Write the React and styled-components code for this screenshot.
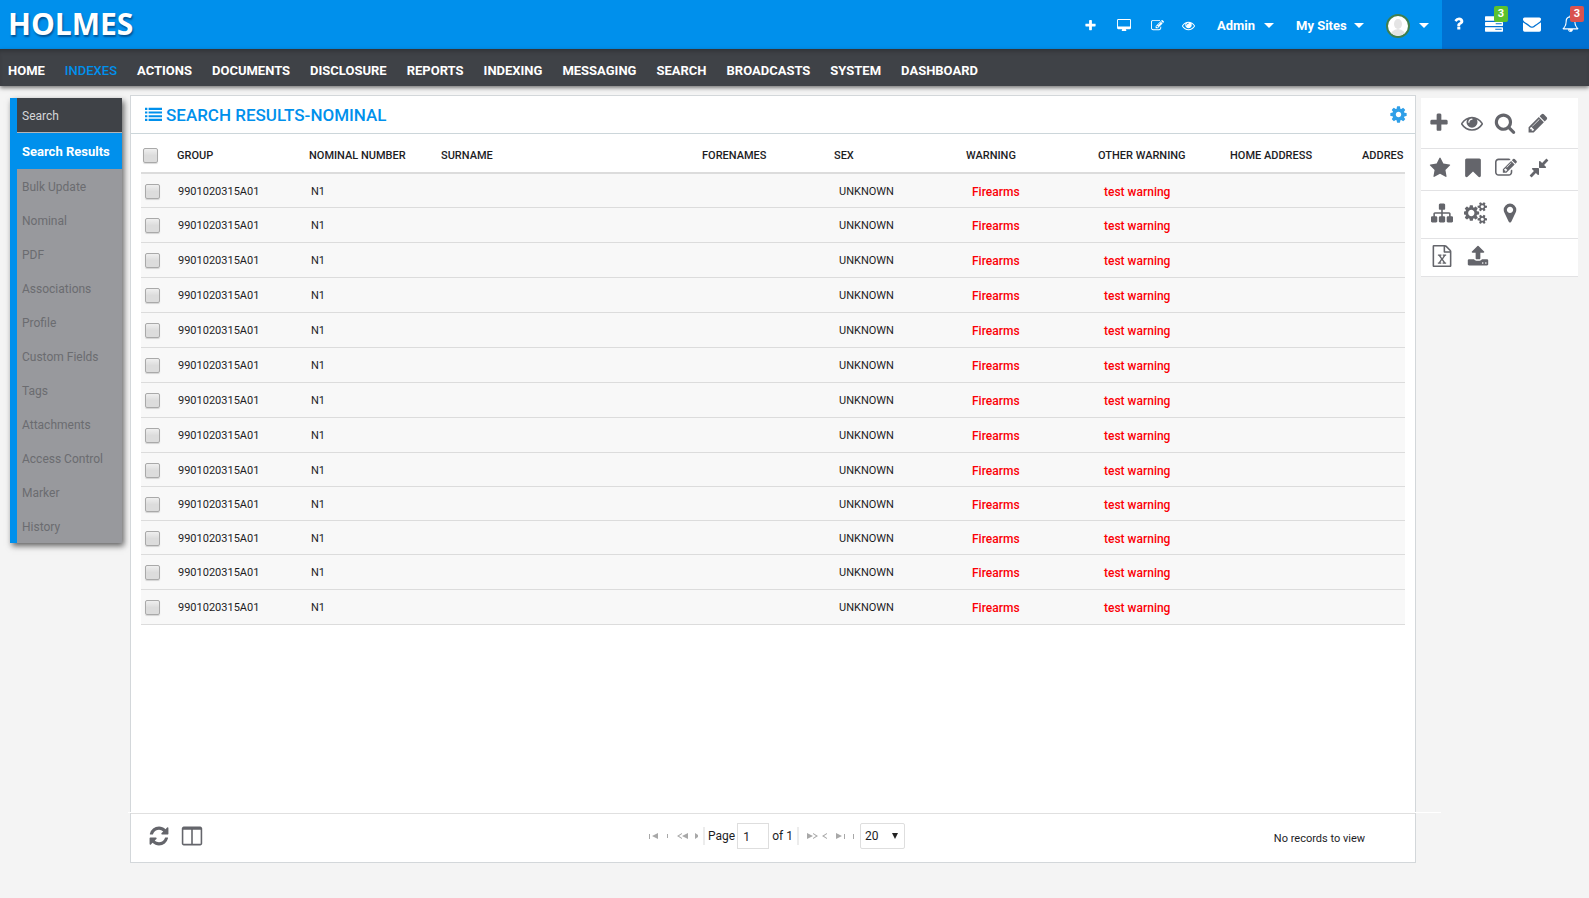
import React from "react";
import styled, { createGlobalStyle, css } from "styled-components";

const GlobalStyle = createGlobalStyle`
  * {
    box-sizing: border-box;
  }
  body {
    margin: 0;
    background: #f4f4f4;
    color: #1d1d1f;
    font-family: Roboto, "Liberation Sans", sans-serif;
    font-size: 12px;
  }
  button, input, select {
    font: inherit;
    color: inherit;
  }
  a {
    color: inherit;
    text-decoration: none;
  }
`;

const Page = styled.div`
  display: flex;
  flex-direction: column;
  min-height: 100vh;
`;

const TopBar = styled.header`
  display: flex;
  height: 49px;
  background: #0090ec;
  color: #fff;
`;

const Brand = styled.a`
  flex: 1;
  padding-left: 8px;
  font-family: "Open Sans", "Noto Sans", sans-serif;
  font-size: 30px;
  font-weight: 700;
  line-height: 48px;
  text-shadow: 1px 2px 2px rgba(0, 40, 90, 0.6);
`;

const TopTools = styled.div`
  display: flex;
  align-items: center;
  padding: 2px 13px 0 0;
`;

const TopButton = styled.button`
  display: flex;
  align-items: center;
  justify-content: ${(props) => (props.$wide ? "space-between" : "center")};
  width: ${(props) => props.$width || 32}px;
  height: 32px;
  padding: 0;
  border: 0;
  background: none;
  font-size: 13px;
  font-weight: 700;
  white-space: nowrap;
  cursor: pointer;
`;

const Menus = styled.div`
  display: flex;
  gap: 22px;
  margin-left: 13px;
`;

const Caret = styled.i`
  border: solid transparent;
  border-width: 5px 5px 0;
  border-top-color: #fff;
`;

const Avatar = styled.span`
  display: flex;
  width: 24px;
  height: 24px;
  border: 2px solid #3f7f4f;
  border-radius: 50%;
  background: #fff;
  overflow: hidden;
`;

const Alerts = styled.div`
  display: flex;
  align-items: center;
  gap: 2px;
  width: 147px;
  padding-bottom: 2px;
  background: #0071d2;
`;

const AlertButton = styled.button`
  position: relative;
  display: flex;
  align-items: center;
  justify-content: center;
  width: ${(props) => (props.$narrow ? 32 : 36)}px;
  height: 36px;
  padding: 0;
  border: 0;
  background: none;
  color: #fff;
  cursor: pointer;
`;

const Badge = styled.span`
  position: absolute;
  top: 0;
  right: 4px;
  padding: 0 4px;
  border-radius: 2px;
  background: ${(props) => props.$color};
  font-size: 11px;
  font-weight: 700;
  line-height: 16px;
`;

const Nav = styled.nav`
  display: flex;
  gap: 20px;
  height: 37px;
  padding: 0 8px;
  background: #3f4247;
  box-shadow: inset 0 4px 4px -2px #2f3236, 0 2px 4px rgba(0, 0, 0, 0.5);
`;

const NavLink = styled.a`
  color: ${(props) => (props.$active ? "#0090ec" : "#fff")};
  font-size: 13px;
  font-weight: ${(props) => (props.$active ? 500 : 700)};
  line-height: 43px;
  white-space: nowrap;
`;

const Workspace = styled.div`
  display: flex;
  flex: 1;
  align-items: flex-start;
  padding: 9px 11px 35px 10px;
`;

const Side = styled.nav`
  display: flex;
  flex-direction: column;
  width: 112px;
  margin: 3px 8px 0 0;
  border-left: 7px solid #0090ec;
  background: #98999d;
  box-shadow: 2px 3px 6px rgba(0, 0, 0, 0.6);
`;

const SideLink = styled.a`
  padding: 2px 0 0 5px;
  color: #6b6c70;
  font-size: 12px;
  line-height: 32px;
  white-space: nowrap;

  ${(props) =>
    props.$open &&
    css`
      border-bottom: 1px solid #b4b5b8;
      background: #3f4247;
      color: #d6d6d8;
    `}
  ${(props) =>
    props.$active &&
    css`
      background: #0090ec;
      color: #fff;
      font-size: 13px;
      font-weight: 700;
      line-height: 34px;
    `}
`;

const Panel = styled.main`
  display: flex;
  flex: 1;
  flex-direction: column;
  align-self: stretch;
  min-width: 0;
  border: 1px solid #d3d7da;
  background: #fff;
`;

const PanelHead = styled.div`
  display: flex;
  align-items: center;
  gap: 4px;
  height: 38px;
  padding: 0 7px 0 14px;
  border-bottom: 1px solid #ccd6da;
  color: #0090ec;
`;

const Title = styled.h1`
  flex: 1;
  margin: 0;
  font-size: 17px;
  font-weight: 500;
`;

const IconButton = styled.button`
  display: flex;
  padding: 0;
  border: 0;
  background: none;
  color: ${(props) => props.$color || "#64656b"};
  cursor: pointer;
`;

const TableWrap = styled.div`
  flex: 1;
  margin: 0 10px;
  overflow: hidden;
`;

const Table = styled.table`
  width: 100%;
  table-layout: fixed;
  border-collapse: separate;
  border-spacing: 0;
`;

const Col = styled.col`
  width: ${(props) => (props.$width ? `${props.$width}px` : "auto")};
`;

const Th = styled.th`
  height: 40px;
  padding: 4px 0 0 ${(props) => (props.$check ? 2 : 6)}px;
  border-bottom: 2px solid #dcdcdc;
  font-size: 11px;
  font-weight: 500;
  text-align: left;
  white-space: nowrap;
`;

const Row = styled.tr`
  height: ${(props) => (props.$tight ? 34 : 35)}px;
  background: #f8f8f8;
`;

const Td = styled.td`
  padding: 1px 0 0 ${(props) => props.$left || 8}px;
  border-bottom: 1px solid #dcdcdc;
  font-size: 11px;
  white-space: nowrap;

  ${(props) =>
    props.$alert &&
    css`
      padding-top: 2px;
      color: #fb0007;
      font-size: 12px;
      font-weight: 500;
    `}
`;

const Check = styled.input`
  display: block;
  width: 15px;
  height: 15px;
  margin: 0;
  border: 1px solid #a9a9a9;
  border-radius: 2px;
  background: linear-gradient(#efefef, #dcdcdc 50%);
  box-shadow: 0 1px 1px rgba(0, 0, 0, 0.15);
  appearance: none;
`;

const Footer = styled.footer`
  position: relative;
  display: grid;
  grid-template-columns: 1fr auto 1fr;
  align-items: center;
  height: 49px;
  padding: 0 17px 5px;
  border-top: 1px solid #e0e0e0;

  /* highlight above the rule, it runs past the panel on both sides */
  &::before {
    content: "";
    position: absolute;
    top: -2px;
    left: -3px;
    right: -26px;
    height: 1px;
    background: #fff;
  }
`;

const FooterTools = styled.div`
  display: flex;
  gap: 11px;
`;

const Pager = styled.div`
  display: flex;
  align-items: center;
  font-size: 12px;
`;

const PagerButton = styled(IconButton)`
  margin-left: 8px;
  color: #a8a8a8;
`;

const PageField = styled.label`
  display: flex;
  align-items: center;
  gap: 2px;
  margin: 0 8px 0 5px;
  padding: 0 4px 0 3px;
  border: solid #ececec;
  border-width: 0 2px;
  line-height: 18px;
`;

const PageInput = styled.input`
  width: 32px;
  height: 26px;
  margin: -4px 1px -4px 0;
  padding: 2px 5px 0;
  border: 1px solid #dedede;
  background: #fff;
`;

const SizeSelect = styled.select`
  width: 45px;
  height: 26px;
  margin-left: 5px;
  padding: 0 0 0 4px;
  border: 1px solid #dedede;
  border-radius: 2px;
  background: #fff;
  appearance: none;
`;

const SizeBox = styled.span`
  position: relative;
  display: flex;
`;

const SizeArrow = styled.i`
  position: absolute;
  top: 10px;
  right: 7px;
  border: solid transparent;
  border-width: 6px 3px 0;
  border-top-color: #222;
  pointer-events: none;
`;

const Status = styled.span`
  padding: 6px 33px 0 0;
  font-size: 11px;
  text-align: right;
`;

const Tools = styled.aside`
  width: 157px;
  margin: 3px 0 0 5px;
  background: #fff;
`;

const ToolRow = styled.div`
  display: flex;
  align-items: center;
  gap: ${(props) => props.$gap}px;
  height: ${(props) => props.$height}px;
  padding: 0 0 ${(props) => props.$bottom || 0}px ${(props) => props.$left}px;
  border-bottom: 1px solid #e2e2e4;
`;

const icons = {
  plus: "M1600 736v192q0 40-28 68t-68 28h-416v416q0 40-28 68t-68 28h-192q-40 0-68-28t-28-68v-416h-416q-40 0-68-28t-28-68v-192q0-40 28-68t68-28h416v-416q0-40 28-68t68-28h192q40 0 68 28t28 68v416h416q40 0 68 28t28 68z",
  desktop:
    "M1728 992v-832q0-13-9.5-22.5t-22.5-9.5h-1600q-13 0-22.5 9.5t-9.5 22.5v832q0 13 9.5 22.5t22.5 9.5h1600q13 0 22.5-9.5t9.5-22.5zm128-832v1088q0 66-47 113t-113 47h-544q0 37 16 77.5t32 71 16 43.5q0 26-19 45t-45 19h-512q-26 0-45-19t-19-45q0-14 16-44t32-70 16-78h-544q-66 0-113-47t-47-113v-1088q0-66 47-113t113-47h1600q66 0 113 47t47 113z",
  edit: "M888 1184l116-116-152-152-116 116v56h96v96h56zm440-720q-16-16-33 1l-350 350q-17 17-1 33t33-1l350-350q17-17 1-33zm80 594v190q0 119-84.5 203.5t-203.5 84.5h-832q-119 0-203.5-84.5t-84.5-203.5v-832q0-119 84.5-203.5t203.5-84.5h832q63 0 117 25 15 7 18 23 3 17-9 29l-49 49q-14 14-32 8-23-6-45-6h-832q-66 0-113 47t-47 113v832q0 66 47 113t113 47h832q66 0 113-47t47-113v-126q0-13 9-22l64-64q15-15 35-7t20 29zm-96-738l288 288-672 672h-288v-288zm444 132l-92 92-288-288 92-92q28-28 68-28t68 28l152 152q28 28 28 68t-28 68z",
  eye: "M1664 960q-152-236-381-353 61 104 61 225 0 185-131.5 316.5t-316.5 131.5-316.5-131.5-131.5-316.5q0-121 61-225-229 117-381 353 133 205 333.5 326.5t434.5 121.5 434.5-121.5 333.5-326.5zm-720-384q0-20-14-34t-34-14q-125 0-214.5 89.5t-89.5 214.5q0 20 14 34t34 14 34-14 14-34q0-86 61-147t147-61q20 0 34-14t14-34zm848 384q0 34-20 69-140 230-376.5 368.5t-499.5 138.5-499.5-139-376.5-368q-20-35-20-69t20-69q140-229 376.5-368t499.5-139 499.5 139 376.5 368q20 35 20 69z",
  question:
    "M1088 1256v240q0 16-12 28t-28 12h-240q-16 0-28-12t-12-28v-240q0-16 12-28t28-12h240q16 0 28 12t12 28zm316-600q0 54-15.5 101t-35 76.5-55 59.5-57.5 43.5-61 35.5q-41 23-68.5 65t-27.5 67q0 17-12 32.5t-28 15.5h-240q-15 0-25.5-18.5t-10.5-37.5v-45q0-83 65-156.5t143-108.5q59-27 84-56t25-76q0-42-46.5-74t-107.5-32q-65 0-108 29-35 25-107 115-13 16-31 16-12 0-25-8l-164-125q-13-10-15.5-25t5.5-28q160-266 464-266 80 0 161 31t146 83 106 127.5 41 158.5z",
  server:
    "M64 128h1664q64 0 64 64v320q0 64-64 64h-1664q-64 0-64-64v-320q0-64 64-64zM64 704h1664q64 0 64 64v256q0 64-64 64h-1664q-64 0-64-64v-256q0-64 64-64zm1000 110v100h600v-100zM64 1216h1664q64 0 64 64v320q0 64-64 64h-1664q-64 0-64-64v-320q0-64 64-64zm1600 150v100h-640v-100z",
  envelope:
    "M1792 710v794q0 66-47 113t-113 47h-1472q-66 0-113-47t-47-113v-794q44 49 101 87 362 246 497 345 57 42 92.5 65.5t94.5 48 110 24.5h2q51 0 110-24.5t94.5-48 92.5-65.5q170-123 498-345 57-39 100-87zm0-294q0 79-49 151t-122 123q-376 261-468 325-10 7-42.5 31t-54 38.5-52 32.5-57.5 27-50 9h-2q-23 0-50-9t-57.5-27-52-32.5-54-38.5-42.5-31q-91-64-262-182.5t-205-142.5q-62-42-117-115.5t-55-136.5q0-78 41.5-130t118.5-52h1472q65 0 112.5 47t47.5 113z",
  bell: "M912 1696q0-16-16-16-59 0-101.5-42.5t-42.5-101.5q0-16-16-16t-16 16q0 73 51.5 124.5t124.5 51.5q16 0 16-16zm-666-288h1300q-266-300-266-832 0-51-24-105t-69-103-121.5-80.5-169.5-31.5-169.5 31.5-121.5 80.5-69 103-24 105q0 532-266 832zm1482 0q0 52-38 90t-90 38h-448q0 106-75 181t-181 75-181-75-75-181h-448q-52 0-90-38t-38-90q50-42 91-88t85-119.5 74.5-158.5 50-206 19.5-260q0-152 117-282.5t307-158.5q-8-19-8-39 0-40 28-68t68-28 68 28 28 68q0 20-8 39 190 28 307 158.5t117 282.5q0 139 19.5 260t50 206 74.5 158.5 85 119.5 91 88z",
  list: "M0 192h250v220h-250zM380 192h1412v220h-1412zM0 580h250v220h-250zM380 580h1412v220h-1412zM0 968h250v220h-250zM380 968h1412v220h-1412zM0 1356h250v220h-250zM380 1356h1412v220h-1412z",
  cog: "M1152 896q0-106-75-181t-181-75-181 75-75 181 75 181 181 75 181-75 75-181zm512-109v222q0 12-8 23t-20 13l-185 28q-19 54-39 91 35 50 107 138 10 12 10 25t-9 23q-27 37-99 108t-94 71q-12 0-26-9l-138-108q-44 23-91 38-16 136-29 186-7 28-36 28h-222q-14 0-24.5-8.5t-11.5-21.5l-28-184q-49-16-90-37l-141 107q-10 9-25 9-14 0-25-11-126-114-165-168-7-10-7-23 0-12 8-23 15-21 51-66.5t54-70.5q-27-50-41-99l-183-27q-13-2-21-12.5t-8-23.5v-222q0-12 8-23t19-13l186-28q14-46 39-92-40-57-107-138-10-12-10-24 0-10 9-23 26-36 98.5-107.5t94.5-71.5q13 0 26 10l138 107q44-23 91-38 16-136 29-186 7-28 36-28h222q14 0 24.5 8.5t11.5 21.5l28 184q49 16 90 37l142-107q9-9 24-9 13 0 25 10 129 119 165 170 7 8 7 22 0 12-8 23-15 21-51 66.5t-54 70.5q26 50 41 98l183 28q13 2 21 12.5t8 23.5z",
  search:
    "M1216 832q0-185-131.5-316.5t-316.5-131.5-316.5 131.5-131.5 316.5 131.5 316.5 316.5 131.5 316.5-131.5 131.5-316.5zm512 832q0 52-38 90t-90 38q-54 0-90-38l-343-342q-179 124-399 124-143 0-273.5-55.5t-225-150-150-225-55.5-273.5 55.5-273.5 150-225 225-150 273.5-55.5 273.5 55.5 225 150 150 225 55.5 273.5q0 220-124 399l343 343q37 37 37 90z",
  pencil:
    "M491 1536l91-91-235-235-91 91v107h128v128h107zm523-928q0-22-22-22-10 0-17 7l-542 542q-7 7-7 17 0 22 22 22 10 0 17-7l542-542q7-7 7-17zm-54-192l416 416-832 832h-416v-416zm683 96q0 53-37 90l-166 166-416-416 166-165q36-38 90-38 53 0 91 38l235 234q37 39 37 91z",
  star: "M1728 647q0 22-26 48l-363 354 86 500q1 7 1 20 0 21-10.5 35.5t-30.5 14.5q-19 0-40-12l-449-236-449 236q-22 12-40 12-21 0-31.5-14.5t-10.5-35.5q0-6 2-20l86-500-364-354q-25-27-25-48 0-37 56-46l502-73 225-455q19-41 49-41t49 41l225 455 502 73q56 9 56 46z",
  bookmark:
    "M1420 128q23 0 44 9 33 13 52.5 41t19.5 62v1289q0 34-19.5 62t-52.5 41q-19 8-44 8-48 0-83-32l-441-424-441 424q-36 33-83 33-23 0-44-9-33-13-52.5-41t-19.5-62v-1289q0-34 19.5-62t52.5-41q21-9 44-9h1048z",
  compress:
    "M896 960v448q0 26-19 45t-45 19-45-19l-144-144-332 332q-10 10-23 10t-23-10l-114-114q-10-10-10-23t10-23l332-332-144-144q-19-19-19-45t19-45 45-19h448q26 0 45 19t19 45zm755-672q0 13-10 23l-332 332 144 144q19 19 19 45t-19 45-45 19h-448q-26 0-45-19t-19-45v-448q0-26 19-45t45-19 45 19l144 144 332-332q10-10 23-10t23 10l114 114q10 10 10 23z",
  sitemap:
    "M1792 1248v320q0 40-28 68t-68 28h-320q-40 0-68-28t-28-68v-320q0-40 28-68t68-28h96v-192h-512v192h96q40 0 68 28t28 68v320q0 40-28 68t-68 28h-320q-40 0-68-28t-28-68v-320q0-40 28-68t68-28h96v-192h-512v192h96q40 0 68 28t28 68v320q0 40-28 68t-68 28h-320q-40 0-68-28t-28-68v-320q0-40 28-68t68-28h96v-192q0-52 38-90t90-38h512v-192h-96q-40 0-68-28t-28-68v-320q0-40 28-68t68-28h320q40 0 68 28t28 68v320q0 40-28 68t-68 28h-96v192h512q52 0 90 38t38 90v192h96q40 0 68 28t28 68z",
  cogs: "M832 896q0-106-75-181t-181-75-181 75-75 181 75 181 181 75 181-75 75-181zm768 512q0-52-38-90t-90-38-90 38-38 90q0 53 37.5 90.5t90.5 37.5 90.5-37.5 37.5-90.5zm0-1024q0-52-38-90t-90-38-90 38-38 90q0 53 37.5 90.5t90.5 37.5 90.5-37.5 37.5-90.5zm-384 421v185q0 10-7 19.5t-16 10.5l-155 24q-11 35-32 76 34 48 90 115 7 11 7 20 0 12-7 19-23 30-82.5 89.5t-78.5 59.5q-11 0-21-7l-115-90q-37 19-77 31-11 108-23 155-7 24-30 24h-186q-11 0-20-7.5t-10-17.5l-23-153q-34-10-75-31l-118 89q-7 7-20 7-11 0-21-8-144-133-144-160 0-9 7-19 10-14 41-53t47-61q-23-44-35-82l-152-24q-10-1-17-9.5t-7-19.5v-185q0-10 7-19.5t16-10.5l155-24q11-35 32-76-34-48-90-115-7-11-7-20 0-12 7-20 22-30 82-89t79-59q11 0 21 7l115 90q34-18 77-32 11-108 23-154 7-24 30-24h186q11 0 20 7.5t10 17.5l23 153q34 10 75 31l118-89q8-7 20-7 11 0 21 8 144 133 144 160 0 8-7 19-12 16-42 54t-45 60q23 48 34 82l152 23q10 2 17 10.5t7 19.5zm640 533v140q0 16-149 31-12 27-30 52 51 113 51 138 0 4-4 7-122 71-124 71-8 0-46-47t-52-68q-20 2-30 2t-30-2q-14 21-52 68t-46 47q-2 0-124-71-4-3-4-7 0-25 51-138-18-25-30-52-149-15-149-31v-140q0-16 149-31 13-29 30-52-51-113-51-138 0-4 4-7 4-2 35-20t59-34 30-16q8 0 46 46.5t52 67.5q20-2 30-2t30 2q51-71 92-112l6-2q4 0 124 70 4 3 4 7 0 25-51 138 17 23 30 52 149 15 149 31zm0-1024v140q0 16-149 31-12 27-30 52 51 113 51 138 0 4-4 7-122 71-124 71-8 0-46-47t-52-68q-20 2-30 2t-30-2q-14 21-52 68t-46 47q-2 0-124-71-4-3-4-7 0-25 51-138-18-25-30-52-149-15-149-31v-140q0-16 149-31 13-29 30-52-51-113-51-138 0-4 4-7 4-2 35-20t59-34 30-16q8 0 46 46.5t52 67.5q20-2 30-2t30 2q51-71 92-112l6-2q4 0 124 70 4 3 4 7 0 25-51 138 17 23 30 52 149 15 149 31z",
  marker:
    "M1152 640q0-106-75-181t-181-75-181 75-75 181 75 181 181 75 181-75 75-181zm256 0q0 109-33 179l-364 774q-16 33-47.5 52t-67.5 19-67.5-19-46.5-52l-365-774q-33-70-33-179 0-212 150-362t362-150 362 150 150 362z",
  excel:
    "M1596 380q28 28 48 76t20 88v1152q0 40-28 68t-68 28h-1344q-40 0-68-28t-28-68v-1600q0-40 28-68t68-28h896q40 0 88 20t76 48zm-444-244v376h376q-10-29-22-41l-313-313q-12-12-41-22zm384 1528v-1024h-416q-40 0-68-28t-28-68v-416h-768v1536h1280zm-979-234v106h281v-106h-75l103-161q5-7 10-16.5t7.5-13.5 3.5-4h2q1 4 5 10 2 4 4.5 7.5t6 8 6.5 8.5l107 161h-76v106h291v-106h-68l-192-273 195-282h67v-107h-279v107h74l-103 159q-4 7-10 16.5t-9 13.5l-2 3h-2q-1-4-5-10-6-11-17-23l-106-159h76v-107h-290v107h68l189 272-194 283h-68z",
  upload:
    "M1344 1472q0-26-19-45t-45-19-45 19-19 45 19 45 45 19 45-19 19-45zm256 0q0-26-19-45t-45-19-45 19-19 45 19 45 45 19 45-19 19-45zm128-224v320q0 40-28 68t-68 28h-1472q-40 0-68-28t-28-68v-320q0-40 28-68t68-28h427q21 56 70.5 92t110.5 36h256q61 0 110.5-36t70.5-92h427q40 0 68 28t28 68zm-325-648q-17 40-59 40h-256v448q0 26-19 45t-45 19h-256q-26 0-45-19t-19-45v-448h-256q-42 0-59-40-17-39 14-69l448-448q18-19 45-19t45 19l448 448q31 30 14 69z",
  refresh:
    "M1639 1056q0 5-1 7-64 268-268 434.5t-478 166.5q-146 0-282.5-55t-243.5-157l-129 129q-19 19-45 19t-45-19-19-45v-448q0-26 19-45t45-19h448q26 0 45 19t19 45-19 45l-137 137q71 66 161 102t187 36q134 0 250-65t186-179q11-17 53-117 8-23 30-23h192q13 0 22.5 9.5t9.5 22.5zm25-800v448q0 26-19 45t-45 19h-448q-26 0-45-19t-19-45 19-45l138-138q-148-137-349-137-134 0-250 65t-186 179q-11 17-53 117-8 23-30 23h-199q-13 0-22.5-9.5t-9.5-22.5v-7q65-268 270-434.5t480-166.5q146 0 284 55.5t245 156.5l130-129q19-19 45-19t45 19 19 45z",
  columns:
    "M224 1536h608v-1152h-640v1120q0 13 9.5 22.5t22.5 9.5zm1376-32v-1120h-640v1152h608q13 0 22.5-9.5t9.5-22.5zm128-1216v1216q0 66-47 113t-113 47h-1344q-66 0-113-47t-47-113v-1216q0-66 47-113t113-47h1344q66 0 113 47t47 113z",
};

const WIDE = ["desktop", "cogs"];

const Icon = ({ name, size = 22 }) => {
  const wide = WIDE.includes(name);
  return (
    <svg
      width={wide ? size + 2 : size}
      height={size}
      viewBox={wide ? "0 0 1920 1792" : "0 0 1792 1792"}
      fill="currentColor"
      fillRule={name === "server" ? "evenodd" : "nonzero"}
      aria-hidden="true"
    >
      <path d={icons[name]} />
    </svg>
  );
};

const menu = [
  "HOME",
  "INDEXES",
  "ACTIONS",
  "DOCUMENTS",
  "DISCLOSURE",
  "REPORTS",
  "INDEXING",
  "MESSAGING",
  "SEARCH",
  "BROADCASTS",
  "SYSTEM",
  "DASHBOARD",
];

const sections = [
  "Search",
  "Search Results",
  "Bulk Update",
  "Nominal",
  "PDF",
  "Associations",
  "Profile",
  "Custom Fields",
  "Tags",
  "Attachments",
  "Access Control",
  "Marker",
  "History",
];

const columns = [
  { title: "GROUP", width: 132 },
  { title: "NOMINAL NUMBER", width: 132 },
  { title: "SURNAME" },
  { title: "FORENAMES", width: 132 },
  { title: "SEX", width: 132 },
  { title: "WARNING", width: 132 },
  { title: "OTHER WARNING", width: 132 },
  { title: "HOME ADDRESS", width: 132 },
  { title: "ADDRES", width: 49 },
];

const results = Array.from({ length: 13 }, (_, i) => ({
  id: i + 1,
  group: "9901020315A01",
  number: "N1",
  sex: "UNKNOWN",
  warning: "Firearms",
  other: "test warning",
  tight: [0, 8, 9, 10].includes(i),
}));

const toolRows = [
  { height: 51, left: 7, gap: 11, tools: ["plus", "eye", "search", "pencil"] },
  {
    height: 42,
    left: 8,
    gap: 11,
    bottom: 3,
    tools: ["star", "bookmark", "edit", "compress"],
  },
  {
    height: 48,
    left: 10,
    gap: 11,
    bottom: 3,
    tools: ["sitemap", "cogs", "marker"],
  },
  { height: 38, left: 10, gap: 14, bottom: 3, tools: ["excel", "upload"] },
];

const Header = () => (
  <TopBar>
    <Brand href="#">HOLMES</Brand>
    <TopTools>
      <TopButton aria-label="Add">
        <Icon name="plus" size={13} />
      </TopButton>
      <TopButton $width={36} aria-label="Screen">
        <Icon name="desktop" size={13} />
      </TopButton>
      <TopButton $width={30} aria-label="Edit">
        <Icon name="edit" size={13} />
      </TopButton>
      <TopButton aria-label="View">
        <Icon name="eye" size={13} />
      </TopButton>
      <Menus>
        <TopButton $wide $width={57}>
          Admin <Caret />
        </TopButton>
        <TopButton $wide $width={68}>
          My Sites <Caret />
        </TopButton>
        <TopButton $wide $width={43} aria-label="Account">
          <Avatar>
            <svg width="20" height="20" viewBox="0 0 20 20" fill="#e4e4e4">
              <ellipse cx="10" cy="8" rx="4" ry="5" />
              <path d="M2 20q1-6 8-7q7 1 8 7z" />
            </svg>
          </Avatar>
          <Caret />
        </TopButton>
      </Menus>
    </TopTools>
    <Alerts>
      <AlertButton $narrow aria-label="Help">
        <Icon name="question" size={17} />
      </AlertButton>
      <AlertButton aria-label="Tasks">
        <Icon name="server" size={18} />
        <Badge $color="#5cc22e">3</Badge>
      </AlertButton>
      <AlertButton aria-label="Messages">
        <Icon name="envelope" size={18} />
      </AlertButton>
      <AlertButton aria-label="Notifications">
        <Icon name="bell" size={17} />
        <Badge $color="#d9534f">3</Badge>
      </AlertButton>
    </Alerts>
  </TopBar>
);

const ResultsTable = () => (
  <TableWrap>
    <Table>
      <colgroup>
        <Col $width={30} />
        {columns.map((c) => (
          <Col key={c.title} $width={c.width} />
        ))}
      </colgroup>
      <thead>
        <tr>
          <Th $check>
            <Check type="checkbox" aria-label="Select all" />
          </Th>
          {columns.map((c) => (
            <Th key={c.title}>{c.title}</Th>
          ))}
        </tr>
      </thead>
      <tbody>
        {results.map((r) => (
          <Row key={r.id} $tight={r.tight}>
            <Td $left={4}>
              <Check type="checkbox" aria-label={`Select row ${r.id}`} />
            </Td>
            <Td $left={7}>{r.group}</Td>
            <Td>{r.number}</Td>
            <Td />
            <Td />
            <Td $left={11}>{r.sex}</Td>
            <Td $left={12} $alert>
              {r.warning}
            </Td>
            <Td $left={12} $alert>
              {r.other}
            </Td>
            <Td />
            <Td />
          </Row>
        ))}
      </tbody>
    </Table>
  </TableWrap>
);

const PagerFooter = () => (
  <Footer>
    <FooterTools>
      <IconButton aria-label="Refresh">
        <Icon name="refresh" />
      </IconButton>
      <IconButton aria-label="Columns">
        <Icon name="columns" />
      </IconButton>
    </FooterTools>
    <Pager>
      <PagerButton aria-label="First page">
        <svg width="20" height="6" fill="currentColor">
          <path d="M0 1h1v5h-1zM9 0v6l-6-3zM18 1h1v4h-1z" />
        </svg>
      </PagerButton>
      <PagerButton aria-label="Previous page">
        <svg width="21" height="6" fill="currentColor">
          <path d="M5 0v1l-3 2l3 2v1l-5-3zM11 0v6l-6-3zM18 0l3 2v2l-3 2z" />
        </svg>
      </PagerButton>
      <PageField>
        Page
        <PageInput defaultValue="1" />
        of 1
      </PageField>
      <svg width="21" height="6" fill="#a8a8a8" aria-hidden="true">
        <path d="M0 0l6 3l-6 3zM6 0l5 3l-5 3v-1l3-2l-3-2zM20 0v1l-3 2l3 2v1l-5-3z" />
      </svg>
      <PagerButton aria-label="Last page">
        <svg width="19" height="6" fill="currentColor">
          <path d="M0 0l6 3l-6 3zM8 1h1v5h-1zM17 1h1v5h-1z" />
        </svg>
      </PagerButton>
      <SizeBox>
        <SizeSelect aria-label="Rows per page" defaultValue="20">
          <option>20</option>
        </SizeSelect>
        <SizeArrow />
      </SizeBox>
    </Pager>
    <Status>No records to view</Status>
  </Footer>
);

export default function App() {
  return (
    <>
      <GlobalStyle />
      <Page>
        <Header />
        <Nav>
          {menu.map((item) => (
            <NavLink key={item} href="#" $active={item === "INDEXES"}>
              {item}
            </NavLink>
          ))}
        </Nav>
        <Workspace>
          <Side>
            {sections.map((item) => (
              <SideLink
                key={item}
                href="#"
                $open={item === "Search"}
                $active={item === "Search Results"}
              >
                {item}
              </SideLink>
            ))}
          </Side>
          <Panel>
            <PanelHead>
              <Icon name="list" size={17} />
              <Title>SEARCH RESULTS-NOMINAL</Title>
              <IconButton $color="#2f9fe8" aria-label="Settings">
                <Icon name="cog" size={19} />
              </IconButton>
            </PanelHead>
            <ResultsTable />
            <PagerFooter />
          </Panel>
          <Tools>
            {toolRows.map((row) => (
              <ToolRow
                key={row.height}
                $height={row.height}
                $left={row.left}
                $gap={row.gap}
                $bottom={row.bottom}
              >
                {row.tools.map((tool) => (
                  <IconButton key={tool} aria-label={tool}>
                    <Icon name={tool} />
                  </IconButton>
                ))}
              </ToolRow>
            ))}
          </Tools>
        </Workspace>
      </Page>
    </>
  );
}
